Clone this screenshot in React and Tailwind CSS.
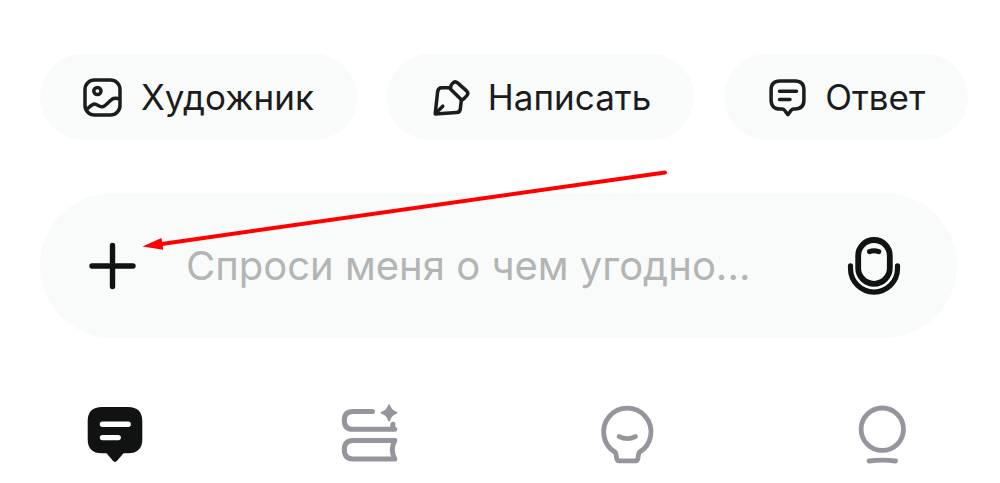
// App.jsx
import React from 'react';

const ArtistIcon = () => (
  <svg viewBox="0 0 40 40" className="h-10 w-10 shrink-0" fill="none" stroke="currentColor" strokeWidth="3.5" strokeLinecap="round" strokeLinejoin="round" aria-hidden="true">
    <rect x="2" y="3" width="35" height="35" rx="9.5" />
    <circle cx="14.4" cy="14" r="3.6" />
    <path d="M3.5 32.5 C6.5 30.5 8.5 27 11.5 27 C14.5 27 16 30.5 19.5 29.8 C23.5 29 27 22.5 30.5 21.5 C33 20.8 34.5 21 36.5 21.8" />
  </svg>
);

const WriteIcon = () => (
  <svg viewBox="0 0 40 40" className="h-10 w-10 shrink-0" fill="none" stroke="currentColor" strokeWidth="3.5" strokeLinecap="round" strokeLinejoin="round" aria-hidden="true">
    <path d="M20.5 10.8 H12 Q8 10.8 7.6 14.8 L5.2 37 L26.5 35.6 Q30 35.3 30.3 32 L31.3 23.5" />
    <path d="M20.6 10.6 Q20.6 8.5 22.5 6.4 Q25 3.6 27.6 5.9 L36.6 13.9 Q39 16.2 36.6 18.9 L33.6 22 Q32 23.4 30.4 21.8 L20.9 12.6 Q20.2 11.8 20.6 10.6 Z" />
    <path d="M6 36 L12.8 29.2" />
  </svg>
);

const AnswerIcon = () => (
  <svg viewBox="0 0 40 40" className="h-10 w-10 shrink-0" fill="none" stroke="currentColor" strokeWidth="3.5" strokeLinecap="round" strokeLinejoin="round" aria-hidden="true">
    <path d="M13 4 H28 C34 4 36.9 7 36.9 12.8 V23 C36.9 28.8 34 32 28 32 H26.5 Q25.1 32 24.2 33.2 L20.9 37.6 L17.5 33.2 Q16.6 32 15.2 32 H13 C7 32 4.1 28.8 4.1 23 V12.8 C4.1 7 7 4 13 4 Z" />
    <path d="M12.5 14.2 H29.5 M12.5 22.6 H23" />
  </svg>
);

const PlusIcon = () => (
  <svg viewBox="0 0 48 48" className="h-12 w-12" fill="none" stroke="currentColor" strokeWidth="5.4" strokeLinecap="round" aria-hidden="true">
    <path d="M24.5 3.5 V44.5 M4 24 H45" />
  </svg>
);

const MicIcon = () => (
  <svg viewBox="0 0 60 60" className="h-15 w-15" fill="none" stroke="currentColor" strokeWidth="5.8" strokeLinecap="round" aria-hidden="true">
    <rect x="13.2" y="4" width="31.6" height="43.8" rx="15.8" />
    <path d="M5.5 29.8 V32.6 A23.5 23.5 0 0 0 52.5 32.6 V29.8" strokeWidth="5.2" />
    <path d="M24.5 15.6 Q29 14 33.8 15.6" strokeWidth="5" />
  </svg>
);

const ChatIcon = () => (
  <svg viewBox="0 0 60 60" className="h-15 w-15" aria-hidden="true">
    <path d="M17 3 H43 C52.5 3 57.3 7.8 57.3 17 V35.5 C57.3 44.5 52.5 49.3 43 49.3 H38.5 L32.3 56.6 Q30 59.2 27.7 56.6 L21.5 49.3 H17 C7.5 49.3 2.7 44.5 2.7 35.5 V17 C2.7 7.8 7.5 3 17 3 Z" fill="currentColor" />
    <path d="M17.5 20.3 H43.2 M17.5 33.6 H33.2" fill="none" stroke="white" strokeWidth="5.4" strokeLinecap="round" />
  </svg>
);

const BooksIcon = () => (
  <svg viewBox="1.5 0 60 60" className="h-15 w-15" fill="none" stroke="currentColor" strokeWidth="5" strokeLinecap="round" strokeLinejoin="round" aria-hidden="true">
    <path d="M33 7.6 H13.5 C7.5 7.6 4.8 11 4.8 16.4 C4.8 22 7.5 25.3 13.5 25.3 H55.3 C53.5 23.8 52.8 22 53.4 20.2" />
    <path d="M55.3 36.5 H13.5 C7.5 36.5 4.8 40 4.8 45.6 C4.8 51.4 7.5 55 13.5 55 H55.3 Q50.3 45.6 55.3 36.5 Z" />
    <path d="M49.6 1.2 Q51.2 7 56.8 8.8 Q51.2 10.6 49.6 16.4 Q48 10.6 42.2 8.8 Q48 7 49.6 1.2 Z" fill="currentColor" strokeWidth="2" />
  </svg>
);

const BulbIcon = () => (
  <svg viewBox="-1 0 60 60" className="h-15 w-15" fill="none" stroke="currentColor" strokeWidth="4.8" strokeLinecap="round" strokeLinejoin="round" aria-hidden="true">
    <path d="M18.4 48.4 A23.7 23.7 0 1 1 42.2 48.4 Q41.4 50 41 54 Q40.7 56.8 38.2 56.8 H22.4 Q19.9 56.8 19.6 54 Q19.2 50 18.4 48.4 Z" />
    <path d="M22.2 32.6 Q30.3 36.6 38.4 32.6" />
  </svg>
);

const ProfileIcon = () => (
  <svg viewBox="0 0 60 60" className="h-15 w-15" fill="none" stroke="currentColor" strokeWidth="4.8" strokeLinecap="round" aria-hidden="true">
    <circle cx="30.3" cy="25.2" r="21.2" />
    <path d="M17 57 Q30.3 55.4 43.6 57" />
  </svg>
);

const actions = [
  { label: 'Художник', Icon: ArtistIcon },
  { label: 'Написать', Icon: WriteIcon },
  { label: 'Ответ', Icon: AnswerIcon },
];

const tabs = [
  { label: 'Чат', Icon: ChatIcon, active: true },
  { label: 'Библиотека', Icon: BooksIcon },
  { label: 'Идеи', Icon: BulbIcon },
  { label: 'Профиль', Icon: ProfileIcon },
];

// Red pointer drawn over the input bar
const Arrow = () => (
  <svg viewBox="0 0 526 84" className="pointer-events-none absolute left-[142px] top-[168px] h-[84px] w-[526px]" aria-hidden="true">
    <path d="M523 4.5 L18 76.2" stroke="#ff0000" strokeWidth="4" strokeLinecap="round" />
    <path d="M0.5 78.5 L19.5 70 L21.2 81.8 Z" fill="#ff0000" />
  </svg>
);

const App = () => (
  <div className="relative overflow-hidden bg-white pt-[54px] pb-5 font-['Inter',sans-serif] text-[#1b1c1c]">
    {/* Quick actions */}
    <div className="flex gap-[30px] pl-10">
      {actions.map(({ label, Icon }) => (
        <button
          key={label}
          type="button"
          className="flex h-[86px] shrink-0 items-center gap-[18px] rounded-full bg-[#f9fbfa] px-[43px] text-[35px] leading-10 whitespace-nowrap"
        >
          <Icon />
          <span>{label}</span>
        </button>
      ))}
    </div>

    {/* Message input */}
    <div className="mt-[53px] mr-[43px] ml-10 flex h-[145px] items-center rounded-full bg-[#f9fbfa] pr-[52px] pl-12 text-[#111212]">
      <button type="button" aria-label="Добавить" className="shrink-0">
        <PlusIcon />
      </button>
      <input
        type="text"
        aria-label="Сообщение"
        placeholder="Спроси меня о чем угодно..."
        className="ml-[50px] min-w-0 flex-1 bg-transparent text-[40px] leading-12 outline-none placeholder:text-[#b3b5b5]"
      />
      <button type="button" aria-label="Голосовой ввод" className="shrink-0">
        <MicIcon />
      </button>
    </div>

    {/* Bottom navigation */}
    <nav className="mt-[66px] flex justify-between pr-[88px] pl-[85px]">
      {tabs.map(({ label, Icon, active }) => (
        <button
          key={label}
          type="button"
          aria-label={label}
          className={active ? 'text-[#111212]' : 'text-[#95959d]'}
        >
          <Icon />
        </button>
      ))}
    </nav>

    <Arrow />
  </div>
);

export default App;
